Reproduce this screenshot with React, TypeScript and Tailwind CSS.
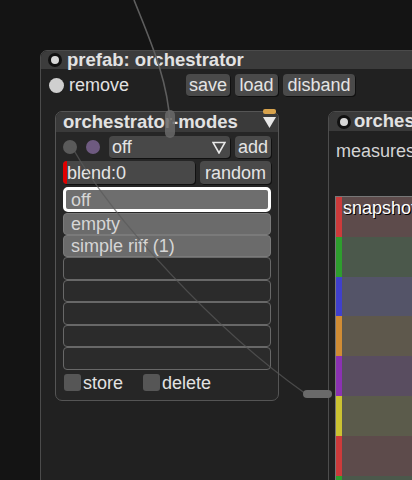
import React from 'react';

const font = { fontFamily: '"Liberation Sans", Arial, sans-serif' };

const stripes = [
  { bar: 'bg-[#cc3b3b]', row: 'bg-[#5d4b4b]' },
  { bar: 'bg-[#2e9e2e]', row: 'bg-[#4b584b]' },
  { bar: 'bg-[#4040cc]', row: 'bg-[#545468]' },
  { bar: 'bg-[#d08c34]', row: 'bg-[#5e584c]' },
  { bar: 'bg-[#8b32b2]', row: 'bg-[#594d60]' },
  { bar: 'bg-[#cbc232]', row: 'bg-[#5b5b4b]' },
  { bar: 'bg-[#cc3b3b]', row: 'bg-[#5d4b4b]' },
  { bar: 'bg-[#2e9e2e]', row: 'bg-[#4b584b]' },
];

function Button({ label, className = '' }: { label: string; className?: string }) {
  return (
    <div
      className={`h-[22px] rounded-[4px] bg-[#4a4a4a] shadow-[1px_1px_0_#111] flex items-center justify-center text-[18px] leading-none text-[#e4e4e4] ${className}`}
    >
      {label}
    </div>
  );
}

function RingDot() {
  return <div className="w-[14px] h-[14px] rounded-full border-[3px] border-[#111] bg-[#d8d8d8] shrink-0" />;
}

export default function App() {
  return (
    <div className="relative w-[412px] h-[480px] overflow-hidden bg-[#141414]" style={font}>
      {/* prefab panel */}
      <div className="absolute left-[40px] top-[50px] w-[420px] h-[460px] rounded-tl-[7px] border border-[#4b4b4b] bg-[#212121]">
        <div className="h-[18px] bg-[#3c3c3c] rounded-tl-[6px] flex items-center gap-[5px] pl-[7px]">
          <RingDot />
          <span className="text-[18.5px] font-bold leading-none text-[#e2e2e2]">prefab: orchestrator</span>
        </div>
        <div className="flex items-center h-[26px] mt-[3px] pl-[8px]">
          <div className="w-[15px] h-[15px] rounded-full bg-[#cfcfcf]" />
          <span className="ml-[5px] text-[18px] leading-none text-[#e2e2e2]">remove</span>
          <div className="ml-[57px] flex gap-[5px]">
            <Button label="save" className="w-[44px]" />
            <Button label="load" className="w-[43px]" />
            <Button label="disband" className="w-[72px]" />
          </div>
        </div>

        {/* orchestrator-modes panel */}
        <div className="absolute left-[14px] top-[60px] w-[224px] h-[290px] rounded-[7px] border border-[#555] bg-[#262626] flex flex-col">
          <div className="h-[20px] bg-[#3a3a3a] rounded-t-[6px] flex items-center justify-between pl-[7px] pr-[2px]">
            <span className="text-[18.5px] font-bold leading-none text-[#e2e2e2]">orchestrator-modes</span>
            <svg width="13" height="11" viewBox="0 0 13 11">
              <polygon points="0,0 13,0 6.5,11" fill="#e8e8e8" />
            </svg>
          </div>
          <div className="absolute right-[2px] top-[-3px] w-[13px] h-[5px] rounded-[2px] bg-[#d7a24c]" />

          <div className="flex items-center mt-[4px] pl-[7px] h-[22px]">
            <div className="w-[14px] h-[14px] rounded-full bg-[#5a5a5a]" />
            <div className="ml-[9px] w-[14px] h-[14px] rounded-full bg-[#6e5a80]" />
            <div className="ml-[9px] w-[121px] h-[22px] rounded-[4px] bg-[#484848] shadow-[1px_1px_0_#111] flex items-center justify-between pl-[3px] pr-[4px]">
              <span className="text-[18px] leading-none text-[#e4e4e4]">off</span>
              <svg width="14" height="13" viewBox="0 0 14 13">
                <polygon points="1,1.5 13,1.5 7,12" fill="none" stroke="#e8e8e8" strokeWidth="1.6" />
              </svg>
            </div>
            <Button label="add" className="ml-[5px] w-[36px]" />
          </div>

          <div className="flex items-center mt-[3px] pl-[7px] h-[23px]">
            <div className="relative w-[132px] h-[23px] rounded-[4px] bg-[#484848] shadow-[1px_1px_0_#111] flex items-center pl-[4px] overflow-hidden">
              <div className="absolute left-0 top-0 w-[4px] h-full bg-[#e00000]" />
              <span className="text-[18px] leading-none text-[#e4e4e4]">blend:0</span>
            </div>
            <Button label="random" className="ml-[5px] w-[71px] h-[23px]" />
          </div>

          <div className="flex flex-col mt-[3px] ml-[7px] w-[208px]">
            <div className="h-[25px] rounded-[5px] border-[3px] border-white bg-[#6e6e6e] flex items-center pl-[5px] text-[18px] leading-none text-[#d6d6d6]">off</div>
            <div className="h-[22px] mt-[1px] rounded-[4px] border border-[#7a7a7a] bg-[#6b6b6b] flex items-center pl-[7px] text-[18px] leading-none text-[#d6d6d6]">empty</div>
            <div className="h-[22px] rounded-[4px] border border-[#7a7a7a] bg-[#6b6b6b] flex items-center pl-[7px] text-[18px] leading-none text-[#d6d6d6]">simple riff (1)</div>
            {[0, 1, 2, 3, 4].map((i) => (
              <div key={i} className="h-[22.6px] rounded-[4px] border border-[#686868] bg-[#2b2b2b]" />
            ))}
          </div>

          <div className="flex items-center mt-[4px] pl-[8px] h-[18px]">
            <div className="w-[17px] h-[17px] rounded-[3px] bg-[#565656]" />
            <span className="ml-[2px] text-[18px] leading-none text-[#e2e2e2]">store</span>
            <div className="ml-[20px] w-[17px] h-[17px] rounded-[3px] bg-[#565656]" />
            <span className="ml-[2px] text-[18px] leading-none text-[#e2e2e2]">delete</span>
          </div>
        </div>

        {/* orchestrator panel (clipped by the window edge) */}
        <div className="absolute left-[287px] top-[60px] w-[200px] h-[420px] rounded-tl-[7px] border border-[#4d4d4d] bg-[#212121] flex flex-col">
          <div className="h-[19px] bg-[#3a3a3a] rounded-tl-[6px] flex items-center gap-[3px] pl-[8px]">
            <RingDot />
            <span className="text-[18.5px] font-bold leading-none text-[#e2e2e2]">orchestrator</span>
          </div>
          <div className="mt-[11px] pl-[7px] text-[18px] leading-none text-[#d4d4d4]">measures</div>
          <div className="mt-[36px] ml-[6px] border-t border-l border-[#777] flex flex-col">
            {stripes.map((s, i) => (
              <div key={i} className={`relative flex h-[39.8px] ${s.row}`}>
                <div className={`w-[6px] h-full ${s.bar}`} />
                {i === 0 && (
                  <span className="ml-[1px] mt-[2px] text-[18px] leading-none text-white [text-shadow:1px_1px_0_#000]">
                    snapshot
                  </span>
                )}
              </div>
            ))}
          </div>
        </div>
      </div>

      {/* patch cables */}
      <svg className="absolute inset-0 pointer-events-none" width="412" height="480">
        <path d="M134,0 C150,40 168,80 170,124" fill="none" stroke="#5e5e5e" strokeWidth="1.6" />
        <path d="M72,147 C112,218 215,330 306,394" fill="none" stroke="#5a5a5a" strokeOpacity="0.7" strokeWidth="1.4" />
        <rect x="165" y="110" width="10" height="28" rx="5" fill="#6a6a6a" fillOpacity="0.85" />
        <rect x="303" y="390" width="29" height="8" rx="4" fill="#6a6a6a" />
      </svg>
    </div>
  );
}
